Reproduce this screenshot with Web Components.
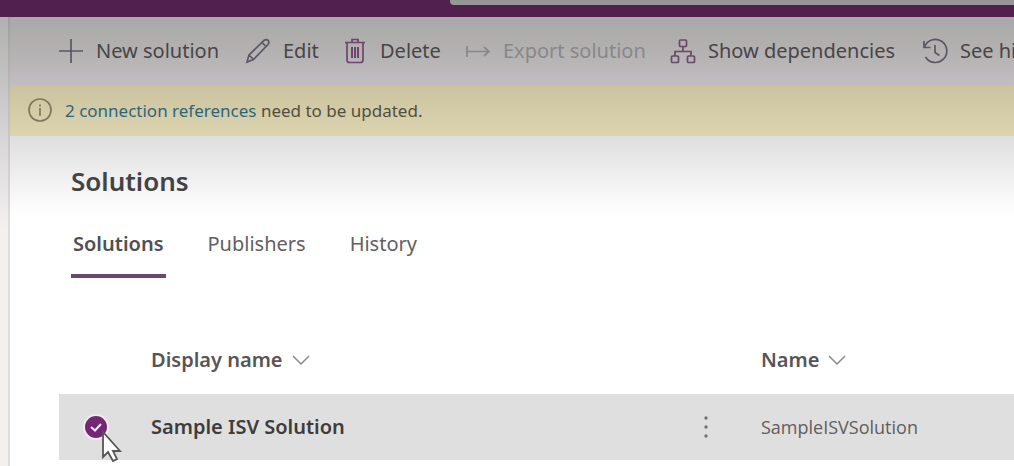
<!DOCTYPE html>
<html lang="en">
<head>
<meta charset="utf-8">
<meta name="viewport" content="width=device-width, initial-scale=1">
<title>Solutions</title>
<style>
html, body { margin: 0; height: 100%; }
body { font-family: "Noto Sans", "Open Sans", sans-serif; font-size: 20px; line-height: 28px; color: #484648; background: #fff; overflow: hidden; }
</style>
</head>
<body>
<app-shell>
  <top-bar slot="top"></top-bar>
  <command-bar>
    <command-button icon="add">New solution</command-button>
    <command-button icon="edit">Edit</command-button>
    <command-button icon="trash">Delete</command-button>
    <command-button icon="export" disabled>Export solution</command-button>
    <command-button icon="tree">Show dependencies</command-button>
    <command-button icon="history">See history</command-button>
  </command-bar>
  <message-bar><a href="#references" slot="link">2 connection references</a> need to be updated.</message-bar>
  <solutions-page heading="Solutions">
    <page-tabs></page-tabs>
    <solution-list></solution-list>
  </solutions-page>
</app-shell>
<script>
const define = (name, html, setup) => customElements.define(name, class extends HTMLElement {
  constructor() {
    super();
    this.attachShadow({ mode: "open" }).innerHTML = html;
  }
  connectedCallback() { if (setup) setup(this, this.shadowRoot); }
});

define("app-shell", `
<style>
:host { display: flex; flex-direction: column; min-height: 100vh; }
.body { flex: 1; display: flex; }
nav { flex: none; box-sizing: border-box; width: 10px; border-right: 2px solid #d8d6d6; border-image: linear-gradient(#9d9e9c, #bdbbbb 80px, #dddbdb 200px) 1; background: linear-gradient(#b0b1ae, #c6c4c5 70px, #dad8d9 130px, #f2f1f0 210px); }
main { flex: 1; min-width: 0; display: flex; flex-direction: column; }
</style>
<slot name="top"></slot>
<div class="body"><nav aria-label="Site"></nav><main><slot></slot></main></div>`);

define("top-bar", `
<style>
:host { display: flex; align-items: flex-end; box-sizing: border-box; height: 17px; padding: 0 0 12px 450px; background: #52204f; overflow: hidden; }
input { flex: 1; min-width: 0; height: 32px; box-sizing: border-box; border: 0; border-radius: 4px 0 0 4px; background: #989797; font: inherit; }
</style>
<input type="search" aria-label="Search">`);

define("command-bar", `
<style>
:host { display: grid; grid-template-columns: 187px 99px 121px 205px 252px 1fr; align-items: center; box-sizing: border-box; height: 68px; padding-left: 48px; background: linear-gradient(#a7aaa6, #b3b1b1 50%, #c1bdc1); overflow: hidden; }
</style>
<slot></slot>`);

const icons = {
  add: '<path d="M13 1v24M1 13h24"/>',
  edit: '<path d="M2 24l2-7L19 2.500c3-2.500 6.500 1 4 4L8.500 21.500zM17 4.500l4.500 4.500M4 17l4.500 4.500"/>',
  trash: '<g stroke="#71436f"><path d="M1 4.500h20M8 4V1.500h6V4M3 5v17q0 2.500 2.500 2.500h11q2.500 0 2.500-2.500V5"/><path d="M8 9v11M11 9v11M14 9v11" stroke-width="2"/></g>',
  export: '<path d="M2 8v11M2 13.500h22M19 9l5 4.500-5 4.500"/>',
  tree: '<g stroke="#6b4769"><rect x="9.500" y="2" width="7" height="6.500" rx="1"/><rect x="1.500" y="18" width="7" height="6.500" rx="1"/><rect x="17.500" y="18" width="7" height="6.500" rx="1"/><path d="M13 8.500v5M5 18v-4.500h16V18"/></g>',
  history: '<path d="M2.500 9A11.500 11.500 0 1 1 3.500 19M2 3v6.500h6.500M13 7v7.500l4.500 3"/>'
};
define("command-button", `
<style>
:host { display: block; }
button { display: flex; align-items: center; gap: 12px; margin: 0; padding: 0; border: 0; background: none; color: #474548; font: inherit; white-space: nowrap; }
button:disabled { color: #89878a; }
svg { flex: none; width: 26px; height: 26px; fill: none; stroke: #5c5763; stroke-width: 1.700; }
.trash { width: 22px; margin-right: 2px; }
button:disabled svg { stroke: #89878a; }
</style>
<button type="button"><svg aria-hidden="true"></svg><span><slot></slot></span></button>`, (el, root) => {
  const name = el.getAttribute("icon");
  const svg = root.querySelector("svg");
  svg.setAttribute("viewBox", name === "trash" ? "0 0 22 26" : "0 0 26 26");
  svg.setAttribute("class", name);
  svg.innerHTML = icons[name];
  root.querySelector("button").disabled = el.hasAttribute("disabled");
});

define("message-bar", `
<style>
:host { display: flex; align-items: center; gap: 12px; box-sizing: border-box; height: 51px; padding: 0 17px; background: linear-gradient(#cbc29f, #dcd3af); color: #514e40; font-size: 17px; }
svg { flex: none; width: 26px; height: 26px; fill: none; stroke: #80795e; stroke-width: 1.700; }
::slotted(a) { color: #2d667b; text-decoration: none; }
</style>
<svg viewBox="0 0 26 26" aria-hidden="true"><circle cx="13" cy="12" r="11"/><path d="M13 10v8M13 6.500v2"/></svg>
<span><slot name="link"></slot><slot></slot></span>`);

define("solutions-page", `
<style>
:host { flex: 1; display: block; padding: 27px 0 0 49px; background: linear-gradient(#dedede, #efefef 40px, #fff 80px); }
h1 { margin: 0 0 0 12px; font-size: 26px; line-height: 36px; font-weight: 600; color: #444244; }
</style>
<h1></h1><slot></slot>`, (el, root) => {
  root.querySelector("h1").textContent = el.getAttribute("heading");
});

define("page-tabs", `
<style>
:host { display: block; margin: 25px 0 0 12px; }
div { display: flex; gap: 40px; }
button { margin: 0; padding: 6px 2px 16px; border: 0; border-bottom: 4px solid transparent; background: none; color: #626062; font: inherit; }
button[aria-selected="true"] { border-color: #6d466c; color: #515051; font-weight: 600; }
</style>
<div role="tablist" aria-label="Solution views">
<button type="button" role="tab" aria-selected="true">Solutions</button>
<button type="button" role="tab" aria-selected="false">Publishers</button>
<button type="button" role="tab" aria-selected="false">History</button>
</div>`);

define("solution-list", `
<style>
:host { display: block; position: relative; margin-top: 48px; }
table { width: 100%; table-layout: fixed; border-collapse: collapse; }
th, td { padding: 0; text-align: left; vertical-align: middle; white-space: nowrap; }
thead th { height: 68px; font-weight: 600; color: #575557; }
tbody tr { height: 66px; background: #e0dfdf; }
tbody th { font-weight: 600; color: #3e3c3d; }
.check { width: 92px; }
.menu { width: 65px; }
.name { width: 253px; }
td.name { color: #5f5d5e; font-family: "Open Sans", sans-serif; font-size: 18px; }
.sort { display: flex; align-items: center; gap: 8px; margin: 0; padding: 0; border: 0; background: none; color: inherit; font: inherit; }
.sort svg { width: 20px; height: 12px; fill: none; stroke: #8b898b; stroke-width: 1.500; }
label { position: relative; display: block; width: 26px; height: 26px; margin-left: 24px; }
input { appearance: none; display: block; box-sizing: border-box; width: 26px; height: 26px; margin: 0; border: 2px solid #f4eaf4; border-radius: 50%; background: #742774; }
label svg { position: absolute; inset: 0; width: 26px; height: 26px; fill: none; stroke: #f6e8f6; stroke-width: 2; pointer-events: none; }
.more { display: block; padding: 0; border: 0; background: none; }
.more svg { display: block; width: 20px; height: 28px; fill: #747274; }
.pointer { position: absolute; left: 42px; bottom: -4px; width: 22px; height: 34px; fill: #fff; stroke: #555; stroke-width: 1.800; pointer-events: none; }
</style>
<table aria-label="Solutions">
<thead><tr><td class="check"></td>
<th scope="col"><button class="sort" type="button">Display name <svg viewBox="0 0 20 12" aria-hidden="true"><path d="M2 2l8 8 8-8"/></svg></button></th>
<td class="menu"></td>
<th class="name" scope="col"><button class="sort" type="button">Name <svg viewBox="0 0 20 12" aria-hidden="true"><path d="M2 2l8 8 8-8"/></svg></button></th></tr></thead>
<tbody><tr>
<td class="check"><label><input type="checkbox" checked aria-label="Select Sample ISV Solution"><svg viewBox="0 0 26 26" aria-hidden="true"><path d="M8 13l4 3.500 6-6.500"/></svg></label></td>
<th scope="row">Sample ISV Solution</th>
<td class="menu"><button class="more" type="button" aria-label="More actions"><svg viewBox="0 0 20 28" aria-hidden="true"><circle cx="10" cy="5" r="1.700"/><circle cx="10" cy="14" r="1.700"/><circle cx="10" cy="23" r="1.700"/></svg></button></td>
<td class="name">SampleISVSolution</td>
</tr></tbody>
</table>
<svg class="pointer" viewBox="0 0 22 34" aria-hidden="true"><path d="M2 2v25l5-5 5 9 4-2-4-8h7z"/></svg>`);
</script>
</body>
</html>
